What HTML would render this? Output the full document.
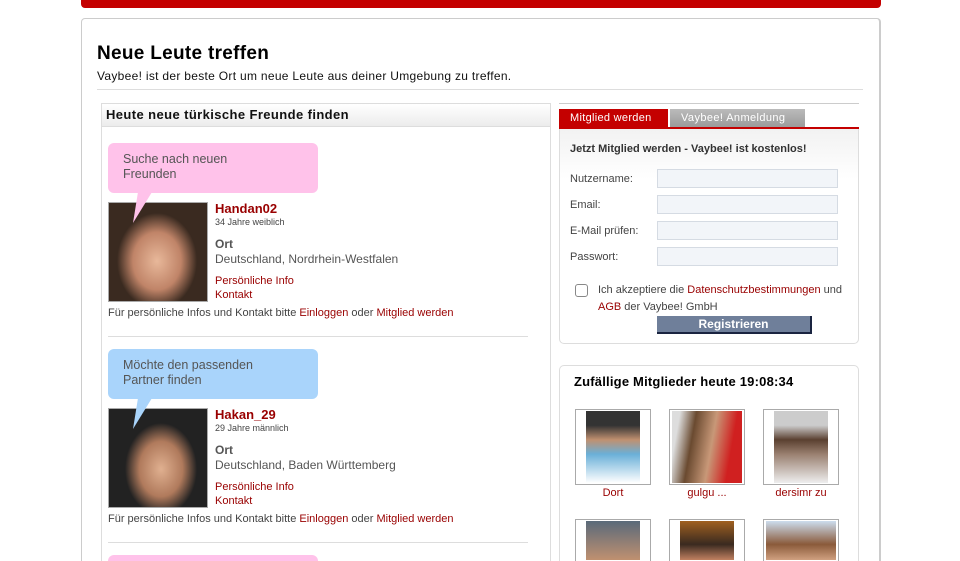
<!DOCTYPE html>
<html style="width:960px;height:561px;overflow:hidden"><head><meta charset="utf-8"><style>
*{margin:0;padding:0;box-sizing:border-box}
body{width:960px;height:561px;overflow:hidden;background:#fff;font-family:"Liberation Sans","DejaVu Sans",sans-serif;color:#333}
#w{position:relative;width:960px;height:561px;overflow:hidden}
.a{position:absolute;white-space:nowrap}
.red{color:#990000}
.bub{position:absolute;width:210px;height:50px;border-radius:6px;font-size:12.5px;color:#555;padding:9px 15px;line-height:15px}
.ph{position:absolute;width:100px;height:100px;border:1px solid #aaa}
.in{position:absolute;left:657px;width:181px;height:19px;background:#f2f5f9;border:1px solid #d5dbe3}
.lbl{position:absolute;left:570px;font-size:11px;color:#444}
.th{position:absolute;width:76px;height:76px;border:1px solid #aaa;background:#fff}
.th div{position:absolute;left:10px;right:10px;top:1px;bottom:1px}
.tn{position:absolute;width:76px;text-align:center;font-size:11px;color:#990000}
</style></head><body><div id="w">
<div class="a" style="left:81px;top:0;width:800px;height:8px;background:#c40000;border-radius:0 0 4px 4px"></div>
<div class="a" style="left:81px;top:18px;width:800px;height:543px;border:1px solid #ccc;border-bottom:none;border-radius:4px 4px 0 0;border-right:2px solid #ccc"></div>
<div class="a" style="left:97px;top:43px;font-size:19px;font-weight:bold;color:#000;letter-spacing:0.3px">Neue Leute treffen</div>
<div class="a" style="left:97px;top:69px;font-size:12px;color:#111;letter-spacing:0.3px">Vaybee! ist der beste Ort um neue Leute aus deiner Umgebung zu treffen.</div>
<div class="a" style="left:97px;top:89px;width:766px;height:1px;background:#ddd"></div>

<div class="a" style="left:101px;top:103px;width:450px;height:458px;border:1px solid #ddd;border-bottom:none"></div>
<div class="a" style="left:102px;top:104px;width:448px;height:23px;background:linear-gradient(#fff,#ececec);border-bottom:1px solid #ddd"></div>
<div class="a" style="left:106px;top:107px;font-size:13px;font-weight:bold;color:#111;letter-spacing:0.4px">Heute neue türkische Freunde finden</div>

<div class="bub" style="left:108px;top:143px;background:#ffc2ea">Suche nach neuen<br>Freunden</div>
<div class="ph" style="left:108px;top:202px;background:radial-gradient(ellipse 40px 48px at 48px 58px,#e8b89a,#c08468 60%,#3a2a20 100%)"></div>
<svg class="a" style="left:128px;top:192px;z-index:2" width="30" height="32"><path d="M10 0 L24 0 L5 31 Z" fill="#ffc2ea"/></svg>
<div class="a red" style="left:215px;top:201px;font-size:13px;font-weight:bold">Handan02</div>
<div class="a" style="left:215px;top:217px;font-size:9px;color:#444">34 Jahre weiblich</div>
<div class="a" style="left:215px;top:237px;font-size:12px;font-weight:bold;color:#555">Ort</div>
<div class="a" style="left:215px;top:252px;font-size:12px;color:#555">Deutschland, Nordrhein-Westfalen</div>
<div class="a red" style="left:215px;top:275px;font-size:11px">Persönliche Info</div>
<div class="a red" style="left:215px;top:289px;font-size:11px">Kontakt</div>
<div class="a" style="left:108px;top:307px;font-size:11px;color:#444">Für persönliche Infos und Kontakt bitte <span class="red">Einloggen</span> oder <span class="red">Mitglied werden</span></div>
<div class="a" style="left:108px;top:336px;width:420px;height:1px;background:#ddd"></div>

<div class="bub" style="left:108px;top:349px;background:#a9d4fb">Möchte den passenden<br>Partner finden</div>
<div class="ph" style="left:108px;top:408px;background:radial-gradient(ellipse 36px 46px at 52px 60px,#e0b090,#b07a5c 60%,#222 100%)"></div>
<svg class="a" style="left:128px;top:398px;z-index:2" width="30" height="32"><path d="M10 0 L24 0 L5 31 Z" fill="#a9d4fb"/></svg>
<div class="a red" style="left:215px;top:407px;font-size:13px;font-weight:bold">Hakan_29</div>
<div class="a" style="left:215px;top:423px;font-size:9px;color:#444">29 Jahre männlich</div>
<div class="a" style="left:215px;top:443px;font-size:12px;font-weight:bold;color:#555">Ort</div>
<div class="a" style="left:215px;top:458px;font-size:12px;color:#555">Deutschland, Baden Württemberg</div>
<div class="a red" style="left:215px;top:481px;font-size:11px">Persönliche Info</div>
<div class="a red" style="left:215px;top:495px;font-size:11px">Kontakt</div>
<div class="a" style="left:108px;top:513px;font-size:11px;color:#444">Für persönliche Infos und Kontakt bitte <span class="red">Einloggen</span> oder <span class="red">Mitglied werden</span></div>
<div class="a" style="left:108px;top:542px;width:420px;height:1px;background:#ddd"></div>
<div class="a" style="left:108px;top:555px;width:210px;height:6px;border-radius:6px 6px 0 0;background:#ffc2ea"></div>

<div class="a" style="left:559px;top:103px;width:300px;height:1px;background:#ccc"></div>
<div class="a" style="left:559px;top:109px;width:109px;height:19px;background:#c40000;color:#fff;font-size:11px;line-height:19px;padding-left:11px;letter-spacing:0.3px">Mitglied werden</div>
<div class="a" style="left:670px;top:109px;width:135px;height:19px;background:linear-gradient(#bbb,#999);color:#fff;font-size:11px;line-height:19px;padding-left:11px;letter-spacing:0.4px">Vaybee! Anmeldung</div>
<div class="a" style="left:559px;top:127px;width:300px;height:2px;background:#c40000"></div>
<div class="a" style="left:559px;top:129px;width:300px;height:215px;border:1px solid #ddd;border-top:none;border-radius:0 0 5px 5px;background:linear-gradient(#f2f2f2,#fff 50px)"></div>
<div class="a" style="left:570px;top:143px;font-size:11px;font-weight:bold;color:#333">Jetzt Mitglied werden - Vaybee! ist kostenlos!</div>
<div class="lbl" style="top:173px">Nutzername:</div><div class="in" style="top:169px"></div>
<div class="lbl" style="top:199px">Email:</div><div class="in" style="top:195px"></div>
<div class="lbl" style="top:225px">E-Mail prüfen:</div><div class="in" style="top:221px"></div>
<div class="lbl" style="top:251px">Passwort:</div><div class="in" style="top:247px"></div>
<div class="a" style="left:575px;top:284px;width:13px;height:13px;border:1px solid #888;border-radius:3px;background:#fff"></div>
<div class="a" style="left:598px;top:284px;font-size:11px;color:#444">Ich akzeptiere die <span class="red">Datenschutzbestimmungen</span> und</div>
<div class="a" style="left:598px;top:301px;font-size:11px;color:#444"><span class="red">AGB</span> der Vaybee! GmbH</div>
<div class="a" style="left:657px;top:316px;width:155px;height:18px;background:#6f7f9a;border-right:2px solid #1a2440;border-bottom:2px solid #1a2440;color:#fff;font-size:12px;font-weight:bold;text-align:center;line-height:16px">Registrieren</div>

<div class="a" style="left:559px;top:365px;width:300px;height:196px;border:1px solid #ddd;border-bottom:none;border-radius:5px 5px 0 0"></div>
<div class="a" style="left:574px;top:374px;font-size:13px;font-weight:bold;color:#000;letter-spacing:0.2px">Zufällige Mitglieder heute 19:08:34</div>
<div class="th" style="left:575px;top:409px"><div style="background:linear-gradient(#333 20%,#c09070 40%,#6ab0d8 60%,#fff)"></div></div>
<div class="th" style="left:669px;top:409px"><div style="left:2px;right:2px;background:linear-gradient(100deg,#ddd 10%,#6a4a30 30%,#c89878 55%,#d02020 80%)"></div></div>
<div class="th" style="left:763px;top:409px"><div style="background:linear-gradient(#ccc 20%,#5a4030 40%,#9a8070 60%,#eee)"></div></div>
<div class="tn" style="left:575px;top:487px">Dort</div>
<div class="tn" style="left:669px;top:487px">gulgu ...</div>
<div class="tn" style="left:763px;top:487px">dersimr zu</div>
<div class="th" style="left:575px;top:519px;height:42px;border-bottom:none"><div style="background:linear-gradient(#5a6a7a,#c09070)"></div></div>
<div class="th" style="left:669px;top:519px;height:42px;border-bottom:none"><div style="background:linear-gradient(#a06020,#3a2a20 60%,#c08060)"></div></div>
<div class="th" style="left:763px;top:519px;height:42px;border-bottom:none"><div style="left:2px;right:2px;background:linear-gradient(#cde,#8a5a3a 60%,#d0a080)"></div></div>
</div></body></html>
